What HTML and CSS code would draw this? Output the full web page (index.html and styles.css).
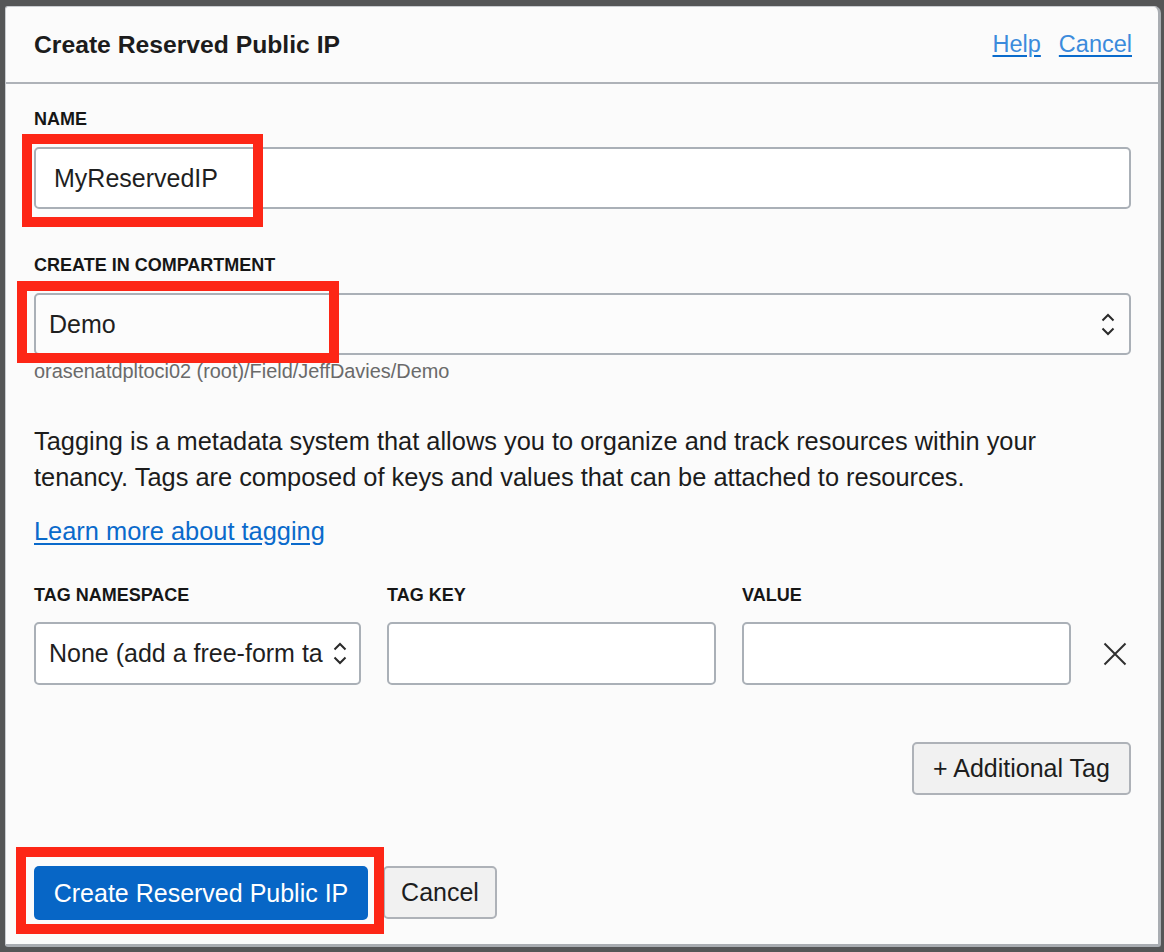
FILE: index.html
```html
<!DOCTYPE html>
<html lang="en">
<head>
<meta charset="utf-8">
<title>Create Reserved Public IP</title>
<link rel="stylesheet" href="styles.css">
</head>
<body>
<div class="dialog">
  <header class="dialog-header">
    <h1 class="dialog-title">Create Reserved Public IP</h1>
    <nav class="header-links">
      <a class="header-link" href="#">Help</a>
      <a class="header-link" href="#">Cancel</a>
    </nav>
  </header>
  <div class="dialog-body">
    <div class="field-label">NAME</div>
    <div class="annotated">
      <div class="text-input name-input">MyReservedIP</div>
      <div class="mark mark-name"></div>
    </div>

    <div class="field-label label-compartment">CREATE IN COMPARTMENT</div>
    <div class="annotated">
      <div class="select-input compartment-select">
        <span class="select-value">Demo</span>
        <svg class="chevrons" width="14" height="23" viewBox="0 0 14 23"><path d="M1.5 7.5 L7 2 L12.5 7.5 M1.5 15.5 L7 21 L12.5 15.5" fill="none" stroke="#2a2a2a" stroke-width="2"/></svg>
      </div>
      <div class="mark mark-compartment"></div>
    </div>
    <div class="helper">orasenatdpltoci02 (root)/Field/JeffDavies/Demo</div>

    <p class="tagging-text">Tagging is a metadata system that allows you to organize and track resources within your tenancy. Tags are composed of keys and values that can be attached to resources.</p>
    <a class="learn-link" href="#">Learn more about tagging</a>

    <div class="tag-grid">
      <div class="field-label tag-label">TAG NAMESPACE</div>
      <div class="field-label tag-label">TAG KEY</div>
      <div class="field-label tag-label">VALUE</div>
      <div></div>
      <div class="select-input ns-select">
        <span class="select-value ns-value">None (add a free-form ta</span>
        <svg class="chevrons" width="14" height="23" viewBox="0 0 14 23"><path d="M1.5 7.5 L7 2 L12.5 7.5 M1.5 15.5 L7 21 L12.5 15.5" fill="none" stroke="#2a2a2a" stroke-width="2"/></svg>
      </div>
      <div class="text-input tag-input"></div>
      <div class="text-input tag-input"></div>
      <div class="remove-tag">
        <svg width="24" height="24" viewBox="0 0 24 24"><path d="M1.5 1.5 L22.5 22.5 M22.5 1.5 L1.5 22.5" fill="none" stroke="#2f2f2f" stroke-width="2"/></svg>
      </div>
    </div>

    <div class="add-row">
      <button class="btn btn-secondary">+ Additional Tag</button>
    </div>

    <div class="footer">
      <div class="annotated inline">
        <button class="btn btn-primary">Create Reserved Public IP</button>
        <div class="mark mark-primary"></div>
      </div>
      <button class="btn btn-secondary btn-cancel">Cancel</button>
    </div>
  </div>
</div>
</body>
</html>
```

FILE: styles.css
```css
* { box-sizing: border-box; }

html, body {
  margin: 0;
  padding: 0;
}

body {
  background: #555657;
  width: 1164px;
  height: 952px;
  padding: 6px 0 0 5px;
  font-family: "Liberation Sans", Arial, sans-serif;
  color: #1d1d1d;
  overflow: hidden;
}

.dialog {
  width: 1156px;
  height: 941px;
  background: #fbfbfb;
  border: 1px solid #c9ccd0;
  border-right: 3px solid #a9adb2;
  border-bottom: 3px solid #a9adb2;
  border-radius: 3px 7px 3px 3px;
}

.dialog-header {
  height: 77px;
  display: flex;
  align-items: center;
  justify-content: space-between;
  padding: 0 26px 0 28px;
  border-bottom: 2px solid #aeb2b8;
}

.dialog-title {
  margin: 0;
  font-size: 24.7px;
  font-weight: bold;
  color: #1c1c1c;
}

.header-links {
  display: flex;
  gap: 18px;
}

.header-link {
  font-size: 23.5px;
  color: #3b8bdc;
  text-decoration: underline;
  text-decoration-color: #0a6bcc;
  text-underline-offset: 3px;
}

.dialog-body {
  padding: 25px 27px 0 28px;
}

.field-label {
  font-size: 18px;
  font-weight: bold;
  line-height: 20px;
  color: #161616;
  margin-bottom: 18px;
}

.label-compartment {
  margin-top: 46px;
}

.annotated {
  position: relative;
}

.annotated.inline {
  display: inline-block;
}

.mark {
  position: absolute;
  border: 10px solid #fd2616;
  pointer-events: none;
}

.mark-name {
  left: -12px;
  top: -13px;
  width: 241px;
  height: 93px;
}

.mark-compartment {
  left: -17px;
  top: -12px;
  width: 322px;
  height: 82px;
}

.mark-primary {
  left: -18px;
  top: -19px;
  width: 368px;
  height: 87px;
}

.text-input {
  height: 62px;
  border: 2px solid #aab0b7;
  border-radius: 5px;
  background: #ffffff;
  font-size: 25px;
  display: flex;
  align-items: center;
  padding-left: 18px;
  color: #1f1f1f;
}

.select-input {
  height: 62px;
  border: 2px solid #aab0b7;
  border-radius: 5px;
  background: #fcfcfc;
  font-size: 25px;
  display: flex;
  align-items: center;
  padding: 0 14px 0 13px;
  color: #1f1f1f;
}

.select-value {
  flex: 1;
  white-space: nowrap;
}

.chevrons {
  flex: none;
}

.helper {
  margin-top: 4px;
  font-size: 19.9px;
  line-height: 24px;
  color: #6a6a6a;
}

.tagging-text {
  margin: 40px 0 0;
  max-width: 1060px;
  font-size: 25.4px;
  line-height: 36px;
  color: #1c1c1c;
}

.learn-link {
  display: inline-block;
  margin-top: 18px;
  font-size: 25.4px;
  line-height: 36px;
  color: #0a6acb;
  text-decoration: underline;
  text-underline-offset: 3px;
}

.tag-grid {
  margin-top: 36px;
  display: grid;
  grid-template-columns: 327px 329px 329px 1fr;
  column-gap: 26px;
  align-items: center;
}

.tag-label {
  margin-bottom: 17px;
}

.tag-grid .select-input,
.tag-grid .text-input {
  height: 63px;
}

.ns-select {
  background: #ffffff;
  padding-right: 12px;
}

.ns-value {
  margin-right: 4px;
}

.remove-tag {
  display: flex;
  justify-content: flex-end;
  padding-right: 4px;
}

.remove-tag svg {
  display: block;
}

.add-row {
  margin-top: 57px;
  display: flex;
  justify-content: flex-end;
}

.btn {
  font-family: "Liberation Sans", Arial, sans-serif;
  font-size: 25px;
  height: 53px;
  border-radius: 5px;
  cursor: pointer;
  display: inline-flex;
  align-items: center;
  justify-content: center;
}

.btn-secondary {
  background: #f1f1f1;
  border: 2px solid #aeb2b8;
  color: #1d1d1d;
  padding: 0 18px;
}

.add-row .btn-secondary {
  width: 219px;
}

.btn-primary {
  background: #0766c6;
  border: none;
  color: #ffffff;
  width: 334px;
  height: 54px;
  padding: 0;
}

.footer {
  margin-top: 71px;
  display: flex;
  align-items: flex-start;
  gap: 15px;
}

.btn-cancel {
  width: 114px;
  padding: 0;
}
```
